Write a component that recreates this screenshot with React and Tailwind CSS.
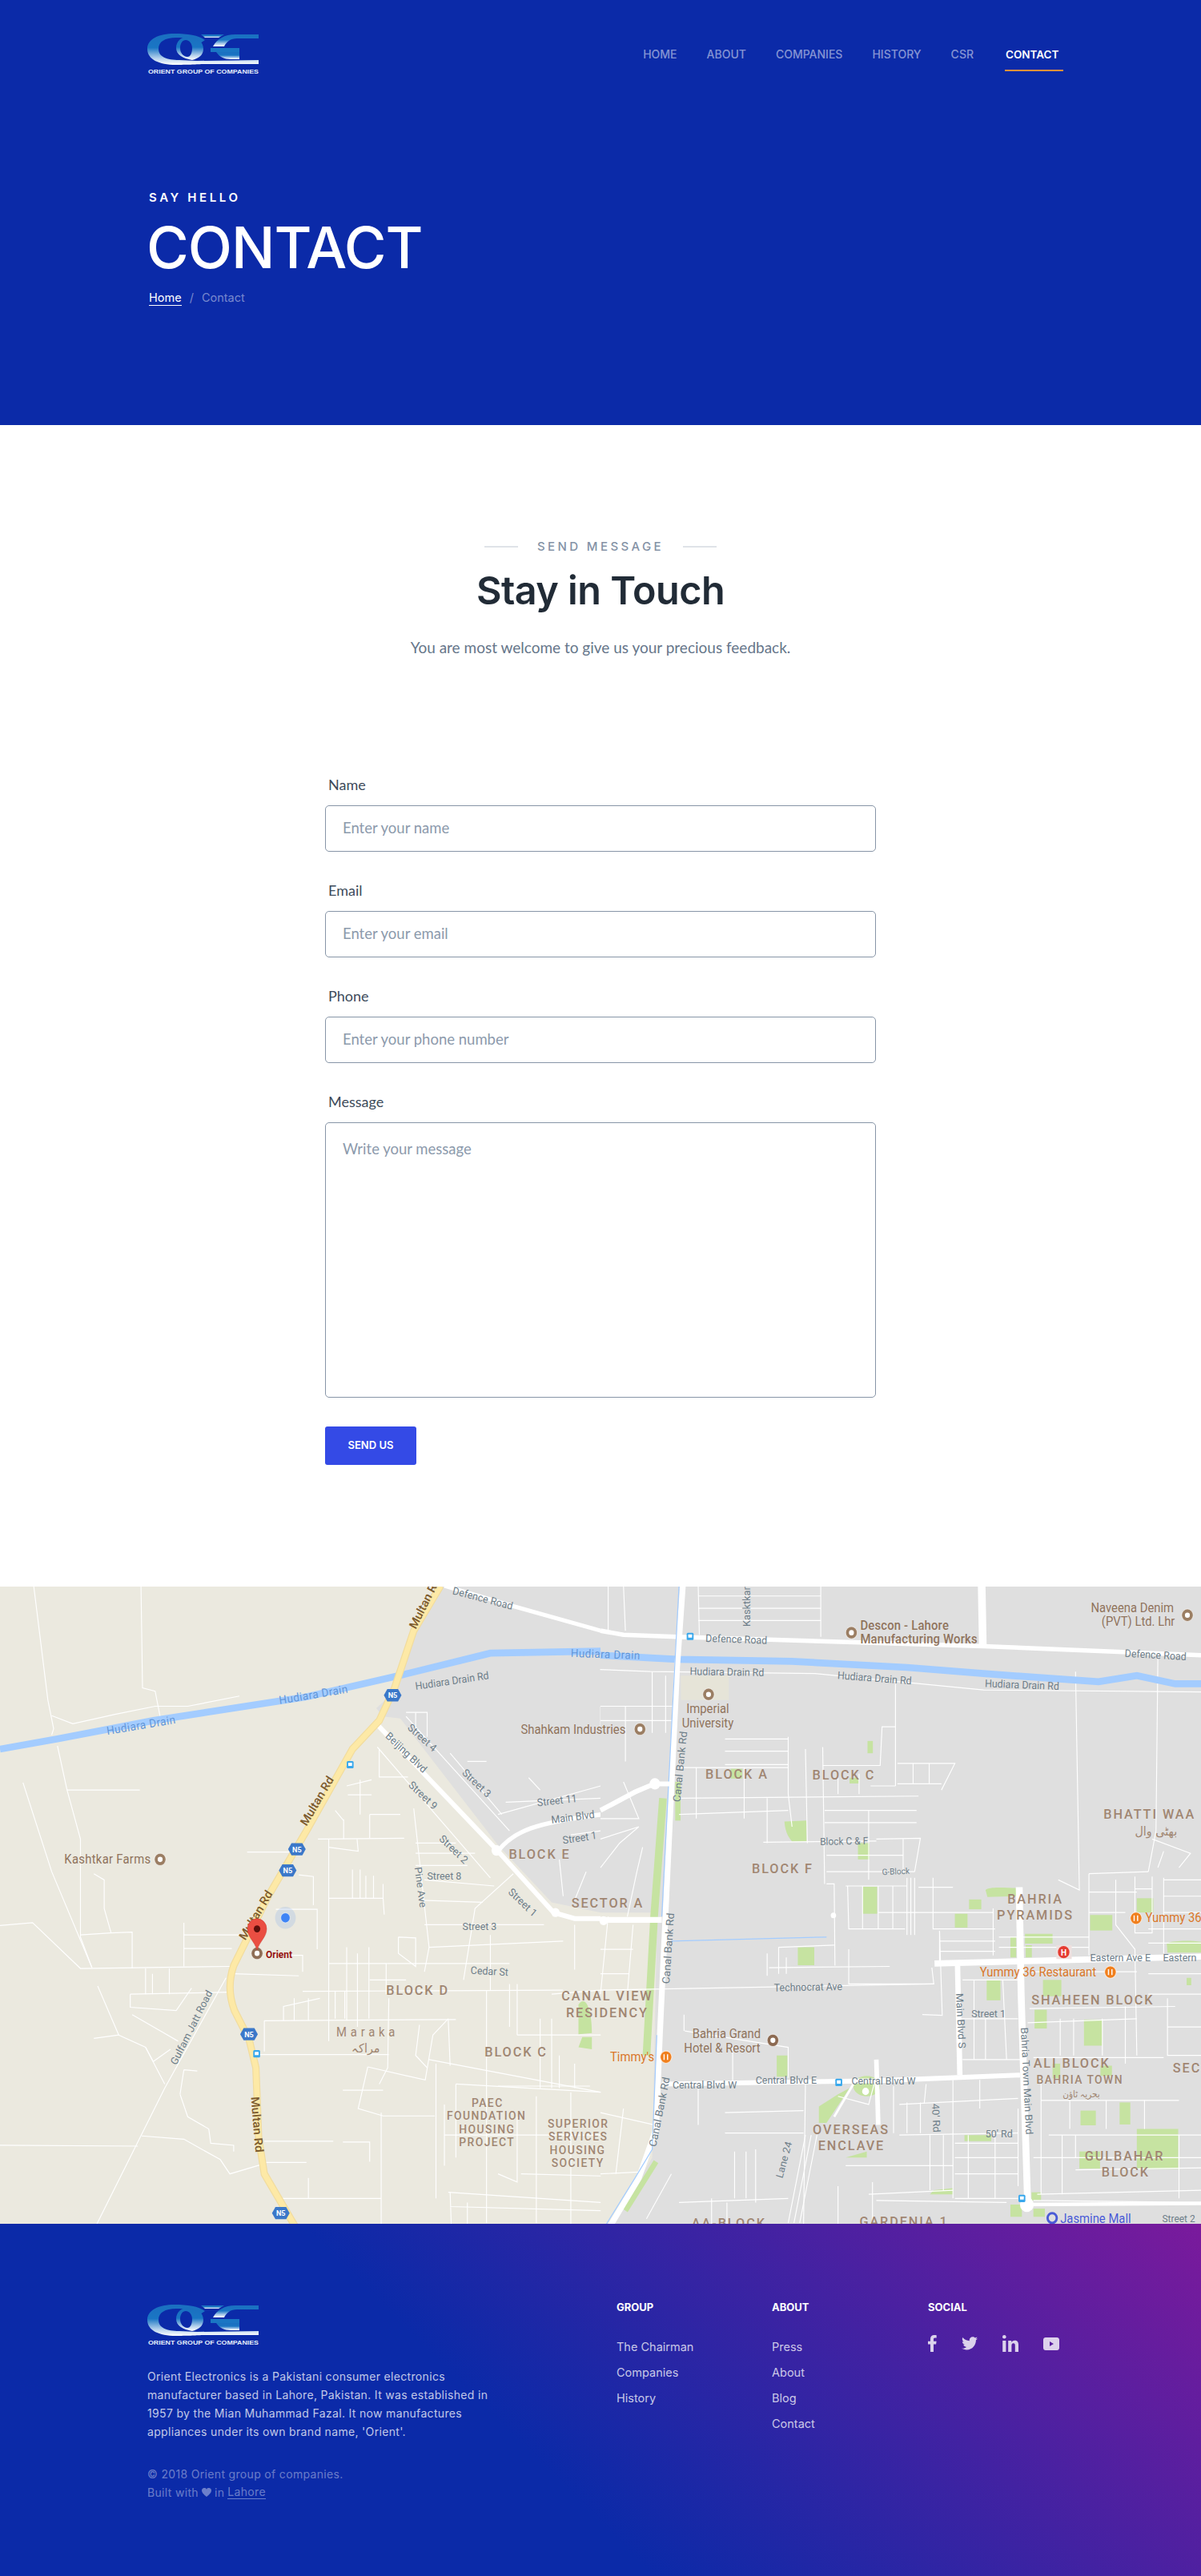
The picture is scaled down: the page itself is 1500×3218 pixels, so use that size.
import React from "react";

const POP = "font-['Inter','Liberation_Sans',sans-serif]";
const AVE = "font-['Lato','Open_Sans',sans-serif]";

function Logo({ id }) {
  return (
    <svg width="140" height="50" viewBox="0 0 140 50" className="block">
      <defs>
        <linearGradient id={id} x1="0" y1="0" x2="0" y2="1">
          <stop offset="0" stopColor="#1a6fc0" />
          <stop offset="0.45" stopColor="#1a76c4" />
          <stop offset="0.8" stopColor="#b9d4ee" />
          <stop offset="1" stopColor="#ffffff" />
        </linearGradient>
      </defs>
      <path fill={`url(#${id})`} fillRule="evenodd" d="M34 0 C50 0 64 2 72 8 L66 12 C60 6 48 5 36 5 C22 5 14 10 14 19 C14 29 24 33 40 33 L62 34 L139 33 L139 38 L80 38 C60 38 58 39 36 39 C14 39 0 32 0 19 C0 7 14 0 34 0 Z" />
      <path fill={`url(#${id})`} fillRule="evenodd" d="M50 4 C62 4 70 10 70 19 C70 27 64 31 56 33 C44 31 36 26 36 18 C36 10 42 4 50 4Z M48 8 C44 8 41 12 41 18 C41 25 46 29 50 29 C54 29 56 24 56 18 C56 12 52 8 48 8Z" />
      <path fill={`url(#${id})`} d="M67 1 L96 1 L89 5 L72 5 Z" />
      <path fill={`url(#${id})`} d="M139 1 L139 6 L112 6 C104 6 99 10 96 16 L82 16 C87 7 96 1 110 1 Z" />
      <path fill="#1a76c4" d="M79 18 L115 18 L115 23 L79 23 Z" />
      <path fill={`url(#${id})`} d="M86 23 L115 23 L115 32 L104 32 C96 32 90 29 86 23 Z" />
      <text x="1" y="49.5" fontSize="7.4" fontWeight="700" fill="#e4eefb" fontFamily="'Liberation Sans',sans-serif" textLength="138" lengthAdjust="spacingAndGlyphs">ORIENT GROUP OF COMPANIES</text>
    </svg>
  );
}

const leftRoads = [
  "M88,0 L125,280 L140,350 L135,365", "M368,0 L372,250 L405,258 L420,330", "M135,318 L190,338 L300,315 L405,295 L490,295 L625,270",
  "M150,392 L175,500 L210,620 L210,860 L240,935", "M175,500 L365,500", "M60,482 L135,700 L240,935",
  "M0,832 L85,825 L210,937 L600,932", "M210,855 L290,850 L345,848 L345,937", "M245,705 L272,720 L272,790 L290,850",
  "M480,825 L480,932", "M480,855 L625,855", "M480,888 L605,888", "M610,950 L780,955",
  "M380,937 L380,1000 M398,950 L398,1000 M442,937 L442,1000", "M340,1000 L340,1032 L460,1040 L500,985", "M340,1000 L600,995",
  "M255,980 L310,1100 L380,1130 L430,1220", "M310,1100 L245,1108", "M345,1050 L465,1115", "M380,1130 L400,1165 L445,1135",
  "M590,960 L430,1230 L250,1568", "M0,1370 L360,1372", "M370,1347 L480,1355 L575,1405 L600,1440 L690,1415",
  "M470,1245 L490,1300 L545,1330 L550,1365 L610,1370 L610,1385", "M480,1185 L515,1188 M470,1245 L480,1185",
  "M645,652 L760,652", "M780,708 L818,712 L818,782", "M720,792 L828,792 L828,890", "M750,905 L790,905 L790,945",
  "M858,620 L858,1115", "M830,620 L1055,618", "M858,640 L935,650 L932,620", "M858,765 L1000,765 L1003,805",
  "M920,695 L920,765 M940,695 L940,765 M955,710 L955,765 M975,710 L975,765 M1000,730 L1000,765",
  "M897,572 L897,620 M965,560 L965,618 M897,575 L875,550 M965,560 L1045,560", "M908,512 L970,512 M905,490 L970,475 M940,475 L940,560",
  "M990,400 L990,468 L1065,468", "M985,395 L1280,715", "M1080,545 L1120,885 L1108,945",
  "M1085,630 L1190,630 M1085,655 L1240,655 M1085,685 L1220,685 M1108,720 L1290,735 M1100,770 L1260,775 M1108,830 L1420,830",
  "M1340,705 L1240,790 L1210,965", "M1120,885 L1470,870", "M1040,860 L1085,862 L1085,932 L1040,900 L1040,860",
  "M1010,925 L1330,925", "M1280,855 L1280,990", "M1500,830 L1500,940", "M1330,975 L1330,1080", "M1350,975 L1350,1100",
  "M905,885 L905,1065 M933,900 L933,1080 M963,885 L963,1060", "M858,925 L1010,925 M965,965 L1060,965 M1008,925 L1008,1000",
  "M790,993 L1470,990", "M835,1010 L740,1030 L740,1065 M768,1010 L768,1065 M805,1010 L805,1065 M875,993 L875,1060 M900,993 L900,1060",
  "M690,1065 L1190,1062", "M690,1065 L690,1140", "M660,1148 L1015,1148", "M1015,1010 L1012,1180 L990,1220", "M960,1178 L1110,1210 L1130,1100 L1170,1060",
  "M960,1178 L935,1280 L1000,1298 L1135,1298", "M895,1235 L1000,1235", "M1095,1075 L1085,1150 L1115,1180", "M1120,1160 L1568,1240",
  "M1170,1060 L1175,1175", "M1270,990 L1270,1560", "M1138,1170 L1138,1500", "M1190,1220 L1190,1400", "M1160,1270 L1160,1420",
  "M1190,1220 L1568,1240", "M1160,1345 L1568,1345", "M1350,1100 L1568,1100", "M1300,1440 L1350,1460 L1350,1300", "M1410,1060 L1410,1230 M1460,1150 L1460,1230 M1500,1170 L1500,1230 M1440,1060 L1440,1230",
  "M1300,1225 L1540,1225", "M1360,1440 L1568,1445", "M1400,1250 L1400,1560", "M1490,1240 L1490,1568", "M1170,1485 L1568,1510", "M1175,1520 L1568,1530 M1175,1485 L1178,1568 M1220,1510 L1220,1568",
  "M690,1360 L870,1360", "M895,1362 L965,1362 L965,1410", "M690,1412 L800,1412 M805,1450 L805,1500 M720,1500 L995,1500", "M995,1290 L995,1568",
  "M1060,320 L1330,600", "M1060,310 L1115,310 L1115,370", "M1085,310 L1085,370", "M1175,410 L1310,560", "M1220,430 L1270,430", "M1300,560 L1568,490", "M1320,530 L1568,520", "M1380,470 L1410,500",
  "M1490,610 L1568,600", "M1530,700 L1500,770 M1460,670 L1470,760", "M1440,1000 L1568,990", "M1568,295 L1568,350",
];

const rightRoads = [
  "M0,110 L60,118", "M255,0 L258,120 M575,0 L575,125", "M255,25 L575,25 M255,55 L575,55 M255,85 L575,85", "M20,0 L20,110 M60,0 L65,110",
  "M-1,205 L130,210 L560,215 L1000,255 L1568,260", "M135,210 L135,360 M65,295 L65,430", "M0,295 L190,295 M0,330 L190,330", "M170,220 L170,360",
  "M325,375 L490,375 M325,405 L490,405 M325,438 L490,438", "M490,370 L490,510 L500,590", "M210,445 L490,445", "M250,445 L250,570 M375,445 L375,570", "M205,520 L830,515",
  "M205,560 L490,550", "M435,520 L435,630 M535,400 L540,630", "M580,395 L585,730", "M580,440 L730,440 L735,345 L770,345", "M770,240 L770,490", "M775,435 L925,435 L890,500", "M775,485 L890,485",
  "M816,435 L816,485 M858,435 L858,485", "M705,490 L770,490 M620,460 L620,510 M675,460 L675,510", "M585,550 L825,550 M585,580 L825,580", "M700,550 L700,720", "M425,628 L720,625 M720,620 L835,618 L820,700", "M590,660 L790,660 M790,620 L790,700",
  "M590,700 L820,700 M590,730 L610,730 L612,930", "M640,735 L800,735 M645,735 L648,840 L795,840", "M684,735 L684,840 M725,735 L725,840 M763,735 L763,840", "M725,800 L1025,800", "M800,715 L800,855 M810,715 L810,855 M820,715 L820,855", "M830,738 L920,738 M868,715 L868,840 L1030,840",
  "M885,845 L885,920 M885,870 L1030,870 M885,895 L1030,895", "M1025,790 L1025,905", "M465,885 L610,880 M435,900 L435,955 M465,885 L465,950 M485,910 L485,950", "M440,935 L755,932", "M648,890 L648,975 L870,975 L865,935",
  "M0,990 L870,975", "M840,1050 L892,1052 L885,845", "M218,1050 L218,1090 M220,1090 L490,1130 L490,1205", "M345,1130 L345,1215", "M255,1225 L255,1320", "M325,1290 L530,1285 M325,1340 L530,1340", "M0,1290 L140,1320",
  "M535,1215 L530,1568", "M350,1385 L350,1500 M380,1385 L380,1500 M405,1380 L405,1510", "M205,1510 L490,1500", "M185,1440 L120,1550", "M290,1500 L290,1568 M330,1510 L330,1568", "M0,1440 L110,1435", "M60,1280 L40,1440", "M20,810 L0,1000 M85,830 L70,1000 M0,890 L85,890 M0,950 L75,950",
  "M1240,210 L1250,745 L1195,720", "M1455,170 L1450,600 L1430,700", "M1275,705 L1430,700", "M1275,705 L1275,905 M1275,750 L1400,750 M1275,800 L1370,800", "M1395,712 L1395,850 L1440,850 L1440,712 M1395,742 L1440,742", "M1345,720 L1345,830 L1395,890 L1400,1150",
  "M1470,720 L1568,720 M1470,760 L1568,760 M1470,800 L1568,800 M1470,715 L1470,900", "M1430,840 L1568,840 M1430,875 L1568,875", "M1440,620 L1540,655 L1510,690 M1470,650 L1455,690", "M1040,860 L1275,860 M1040,885 L1275,885",
  "M1120,945 L1400,945", "M1120,1035 L1500,1030", "M1115,1070 L1400,1060", "M1200,1060 L1200,1150 M1235,1060 L1235,1150 M1310,1060 L1310,1150 M1370,1030 L1370,1170", "M1130,1155 L1470,1155", "M1480,1010 L1480,1150 L1568,1150 M1480,1080 L1568,1080 M1430,950 L1568,950 M1430,1000 L1568,1000",
  "M945,965 L1095,965 M940,1060 L1090,1060", "M975,965 L975,1160 M1050,965 L1060,1160 M1005,1060 L1005,1160", "M945,1160 L1095,1160", "M1150,1260 L1510,1260 M1150,1210 L1150,1490", "M1225,1260 L1225,1330 M1320,1260 L1320,1330 M1420,1260 L1420,1330",
  "M1170,1345 L1568,1345", "M1205,1345 L1205,1490 M1240,1345 L1240,1400 M1510,1345 L1510,1500", "M1240,1430 L1568,1425", "M1130,1400 L1568,1400", "M1140,1490 L1568,1480", "M920,1210 L920,1500", "M850,1220 L845,1268 M765,1225 L765,1340 M800,1265 L800,1340 M835,1265 L835,1340",
  "M780,1270 L1090,1255 M990,1210 L990,1280", "M780,1345 L1090,1340", "M925,1365 L1090,1365 M925,1400 L1090,1400 M925,1440 L1090,1440 M925,1500 L1090,1500", "M960,1345 L960,1500 M1030,1345 L1030,1500", "M860,1345 L860,1480 M895,1345 L895,1480", "M700,1490 L920,1480",
  "M1090,1280 L1090,1470", "M535,1345 L490,1560 M550,1345 L505,1560 M565,1345 L520,1560", "M620,1250 L700,1270 L720,1200",
  "M640,1420 L920,1420", "M720,1505 L1060,1510", "M620,1470 L620,1568 M710,1460 L710,1568", "M1130,1505 L1568,1510",
  "M0,570 L100,570 L60,480 M0,620 L100,590 L50,630 L0,690", "M110,640 L95,700 L70,810",
];

const greens = [
  "M480,577 L538,575 L538,626 L500,626 C485,610 482,595 480,577Z", "M697,380 h14 v30 h-14Z", "M672,630 h30 v40 h-30Z", "M684,737 h38 v66 h-38Z", "M515,885 h43 v44 h-43Z",
  "M962,768 h32 v24 h-32Z", "M925,803 h33 v34 h-33Z", "M1005,745 C1015,735 1060,740 1085,740 L1085,760 L1010,762Z", "M1278,806 h58 v38 h-58Z", "M1400,765 h43 v35 h-43Z",
  "M1108,852 h72 v24 h-72Z", "M1070,860 h15 v50 h-15Z", "M1110,880 h16 v30 h-16Z", "M1155,965 h48 v40 h-48Z", "M1008,965 h36 v50 h-36Z", "M1133,1038 h32 v46 h-32Z", "M1262,1062 h48 v64 h-48Z",
  "M1253,1285 h40 v36 h-40Z", "M1355,1265 h28 v54 h-28Z", "M1400,1330 h108 v98 h-108Z", "M1250,1385 h54 v42 h-54Z", "M460,1150 h28 v52 h-28Z", "M570,1275 L620,1245 L650,1230 L590,1315 L570,1315Z",
  "M660,1225 a35,25 0 1 0 70,0 a35,25 0 0 0 -70,0Z", "M950,1345 L1020,1345 L1020,1360 L950,1360Z", "M640,1400 L695,1385 L695,1400Z", "M1180,1170 h20 v36 h-20Z", "M1305,1175 h30 v25 h-30Z", "M1530,960 h12 v18 h-12Z",
  "M1478,875 C1500,868 1540,868 1568,872 L1568,898 L1480,898Z", "M650,470 h24 v14 h-24Z", "M340,448 h30 v24 h-30Z", "M195,480 h14 v95 h-14Z", "M870,1480 L920,1475 L920,1490 L860,1490Z", "M1070,1515 h30 v30 h-30Z", "M1125,1485 h25 v20 h-25Z", "M1130,1525 h30 v20 h-30Z",
];

const T = ({ x, y, s = 30, c = "#6d7d88", r, w = 400, sp, a = "start", f = "Roboto,'Noto Sans',sans-serif", children }) => (
  <text x={x} y={y} fontSize={s} fill={c} fontWeight={w} letterSpacing={sp} textAnchor={a} fontFamily={f}
    stroke="#ffffff" strokeOpacity="0.35" strokeWidth="0.6" paintOrder="stroke"
    transform={r ? `rotate(${r} ${x} ${y})` : undefined}>{children}</text>
);

const N5 = ({ x, y }) => (
  <g>
    <path d={`M${x - 23},${y} L${x - 14},${y - 15} L${x + 14},${y - 15} L${x + 23},${y} L${x + 14},${y + 15} L${x - 14},${y + 15} Z`} fill="#3b78c9" />
    <text x={x} y={y + 7} fontSize="19" fill="#fff" fontWeight="700" textAnchor="middle" fontFamily="Roboto,sans-serif">N5</text>
  </g>
);
const Bus = ({ x, y }) => (
  <g>
    <rect x={x - 9} y={y - 9} width="18" height="18" rx="3" fill="#39a8ec" />
    <rect x={x - 5} y={y - 5} width="10" height="8" rx="1" fill="#fff" />
  </g>
);
const Poi = ({ x, y, c = "#9b7e63" }) => (
  <g>
    <circle cx={x} cy={y} r="15" fill={c} stroke="#fff" strokeOpacity="0.6" strokeWidth="2" />
    <circle cx={x} cy={y} r="6.5" fill="#fff" />
  </g>
);
const Food = ({ x, y }) => (
  <g>
    <circle cx={x} cy={y} r="15" fill="#f07f1d" stroke="#fff" strokeOpacity="0.7" strokeWidth="2" />
    <path d={`M${x - 5},${y - 7} v14 M${x + 4},${y - 7} v14`} stroke="#fff" strokeWidth="3" />
  </g>
);

const BR = "#8f735c";
const BROWN_B = "#a08672";
const MULTAN = "M1150,0 L1080,110 L1030,250 L990,330 L920,400 L800,600 L700,760 L610,930 Q590,985 612,1040 L650,1110 L668,1180 L675,1350 L690,1440 L770,1568";

function MapArt() {
  return (
    <svg viewBox="0 0 1500 796" width="1500" height="796" className="block" preserveAspectRatio="none">
      <rect width="1500" height="796" fill="#ebe9df" />
      <g transform="translate(0,-1) scale(0.47847,0.5102)">
        <path d="M1150,0 L1568,0 L1568,800 L1440,775 L1300,635 L1045,325 L1000,320 L982,300 L1040,250 L1080,110 Z" fill="#dfdfdf" />
        {leftRoads.map((d, i) => <path key={i} d={d} fill="none" stroke="#fff" strokeWidth="2.4" />)}
        <path d="M1160,0 L1340,50 L1568,110" fill="none" stroke="#fff" strokeWidth="10" />
        <path d="M0,400 L150,375 L400,330 L800,272 L1050,218 L1280,165 L1568,160" fill="none" stroke="#a3ccff" strokeWidth="17" />
        <path d="M985,340 L1300,650 L1445,800 L1500,815 L1568,815" fill="none" stroke="#fff" strokeWidth="12" />
        <path d="M1300,650 C1340,600 1400,580 1568,560" fill="none" stroke="#fff" strokeWidth="11" />
        <path d={MULTAN} fill="none" stroke="#f1dc9e" strokeWidth="19" />
        <path d={MULTAN} fill="none" stroke="#fde9a6" strokeWidth="14" />
        <circle cx="1296" cy="648" r="13" fill="#fff" />
        <circle cx="1450" cy="800" r="11" fill="#fff" />
        <T x="1085" y="108" s="30" c="#7c5a2c" r="-62" w={500}>Multan Rd</T>
        <T x="1180" y="20" s="26" r="14">Defence Road</T>
        <T x="1085" y="255" s="26" r="-8">Hudiara Drain Rd</T>
        <T x="730" y="290" s="28" c="#5f95d8" r="-9" sp="1">Hudiara Drain</T>
        <T x="280" y="365" s="28" c="#5f95d8" r="-9" sp="1">Hudiara Drain</T>
        <T x="1062" y="350" s="26" r="40">Street 4</T>
        <T x="1005" y="370" s="26" r="42">Beijing Blvd</T>
        <T x="1205" y="460" s="26" r="42">Street 3</T>
        <T x="1065" y="490" s="26" r="42">Street 9</T>
        <T x="1403" y="540" s="26" r="-6">Street 11</T>
        <T x="1440" y="582" s="26" r="-7">Main Blvd</T>
        <T x="1470" y="632" s="26" r="-8">Street 1</T>
        <T x="1145" y="622" s="26" r="42">Street 2</T>
        <T x="1115" y="720" s="26">Street 8</T>
        <T x="1082" y="690" s="26" r="82">Pine Ave</T>
        <T x="1325" y="752" s="26" r="42">Street 1</T>
        <T x="1207" y="842" s="26">Street 3</T>
        <T x="1228" y="950" s="26" r="3">Cedar St</T>
        <T x="800" y="590" s="30" c="#7c5a2c" r="-58" w={500}>Multan Rd</T>
        <T x="640" y="870" s="30" c="#7c5a2c" r="-58" w={500}>Multan Rd</T>
        <T x="655" y="1252" s="30" c="#7c5a2c" r="85" w={500}>Multan Rd</T>
        <T x="460" y="1175" s="26" r="-62">Gulfam Jatt Road</T>
        <T x="168" y="680" s="31" c={BR} sp="0.6">Kashtkar Farms</T>
        <Poi x={418} y={670} />
        <T x="1328" y="668" s="34" c={BROWN_B} w={500} sp="4">BLOCK E</T>
        <T x="1008" y="1002" s="34" c={BROWN_B} w={500} sp="4">BLOCK D</T>
        <T x="1265" y="1152" s="34" c={BROWN_B} w={500} sp="4">BLOCK C</T>
        <T x="878" y="1104" s="31" c={BROWN_B} sp="10">Maraka</T>
        <text x="955" y="1142" fontSize="30" fill={BROWN_B} textAnchor="middle" fontFamily="'DejaVu Sans',sans-serif">مراکہ</text>
        <T x="1231" y="1276" s="29" c={BROWN_B} w={500} sp="3">PAEC</T>
        <T x="1166" y="1308" s="29" c={BROWN_B} w={500} sp="3">FOUNDATION</T>
        <T x="1198" y="1341" s="29" c={BROWN_B} w={500} sp="3">HOUSING</T>
        <T x="1198" y="1373" s="29" c={BROWN_B} w={500} sp="3">PROJECT</T>
        <path d="M1510,1025 C1530,1000 1545,1040 1545,1095 L1510,1098 Z M1510,1130 L1520,1105 L1545,1105 L1545,1135 Z" fill="#c5e3a0" />
        <N5 x={1025} y={268} /><N5 x={775} y={645} /><N5 x={751} y={697} /><N5 x={650} y={1098} /><N5 x={733} y={1536} />
        <Bus x={914} y={438} /><Bus x={670} y={1146} />
        <circle cx="745" cy="813" r="27" fill="#4285f4" fillOpacity="0.15" />
        <circle cx="745" cy="813" r="12" fill="#3f84f5" stroke="#fff" strokeWidth="1" />
        <circle cx="671" cy="900" r="15" fill="#8e6d55" stroke="#fff" strokeOpacity="0.5" strokeWidth="2" />
        <circle cx="671" cy="900" r="6.5" fill="#fff" />
        <path d="M671,892 C664,870 646,860 646,840 A25,25 0 0 1 696,840 C696,860 678,870 671,892 Z" fill="#ea4e42" stroke="#c9372c" strokeWidth="1" />
        <circle cx="671" cy="840" r="8.5" fill="#5c0f0a" />
        <T x="694" y="912" s="25" c="#96120f" w={700}>Orient</T>
      </g>
      <g transform="translate(750,-1) scale(0.47847,0.5102)">
        <path d="M0,0 L1568,0 L1568,1568 L20,1568 L110,1440 L135,1400 L148,800 L0,800 Z" fill="#dfdfdf" />
        <path d="M210,220 h125 v60 h-125Z" fill="#e6e4d8" />
        {greens.map((d, i) => <path key={i} d={d} fill="#c6e3a1" />)}
        <path d="M163,520 L140,810 L120,1150" fill="none" stroke="#c6e3a1" strokeWidth="20" />
        <path d="M145,1410 L65,1530" fill="none" stroke="#c6e3a1" strokeWidth="14" />
        {rightRoads.map((d, i) => <path key={i} d={d} fill="none" stroke="#fff" strokeWidth="2.4" />)}
        <path d="M0,110 L60,120 L200,125 L1000,148 L1568,170" fill="none" stroke="#fff" strokeWidth="11" />
        <path d="M995,0 L998,148" fill="none" stroke="#fff" strokeWidth="20" />
        <path d="M0,170 L200,180 L500,185 L800,200 L1000,215 L1300,235 L1400,220 L1500,240 L1568,240" fill="none" stroke="#a3ccff" strokeWidth="17" />
        <path d="M215,0 L200,200 L170,800 L155,1100 L145,1330 L100,1450 L25,1568" fill="none" stroke="#fff" strokeWidth="15" />
        <path d="M205,0 L188,300 L160,810" fill="none" stroke="#a3ccff" strokeWidth="2.5" />
        <path d="M147,1100 L135,1380 L90,1450 L12,1568" fill="none" stroke="#a3ccff" strokeWidth="2.5" />
        <path d="M185,870 L590,860" fill="none" stroke="#a3ccff" strokeWidth="2.5" />
        <path d="M0,550 L90,505 L140,485 L180,485" fill="none" stroke="#fff" strokeWidth="12" />
        <circle cx="142" cy="485" r="14" fill="#fff" />
        <path d="M0,818 L160,818" fill="none" stroke="#fff" strokeWidth="14" />
        <circle cx="8" cy="820" r="11" fill="#fff" />
        <path d="M160,1220 L720,1212 L1095,1198" fill="none" stroke="#fff" strokeWidth="12" />
        <path d="M872,925 L1270,915 L1568,908" fill="none" stroke="#fff" strokeWidth="15" />
        <path d="M932,930 L938,1198" fill="none" stroke="#fff" strokeWidth="14" />
        <path d="M1093,738 L1098,1000 L1115,1515" fill="none" stroke="#fff" strokeWidth="18" />
        <path d="M1105,1515 L1568,1512" fill="none" stroke="#fff" strokeWidth="9" />
        <circle cx="1113" cy="1515" r="18" fill="#fff" />
        <path d="M720,1160 L725,1320" fill="none" stroke="#fff" strokeWidth="12" />
        <path d="M610,1300 L660,1220" fill="none" stroke="#fff" strokeWidth="6" />
        <circle cx="692" cy="1238" r="9" fill="#fff" />
        <circle cx="608" cy="807" r="7" fill="#fff" />
        <T x="-78" y="174" s="28" c="#5f95d8" r="2" sp="1">Hudiara Drain</T>
        <T x="-208" y="362" s="31" c={BR}>Shahkam Industries</T>
        <T x="274" y="137" s="26" r="2">Defence Road</T>
        <T x="390" y="100" s="25" r="-90">Kasktkar</T>
        <T x="678" y="108" s="31" c={BR} w={500} sp="0.4">Descon - Lahore</T>
        <T x="678" y="142" s="31" c={BR} w={500} sp="0.4">Manufacturing Works</T>
        <Poi x={655} y={115} />
        <T x="1280" y="64" s="31" c={BR}>Naveena Denim</T>
        <T x="1308" y="99" s="31" c={BR}>(PVT) Ltd. Lhr</T>
        <Poi x={1532} y={72} />
        <T x="1368" y="174" s="26" r="3">Defence Road</T>
        <T x="233" y="218" s="26" r="1">Hudiara Drain Rd</T>
        <T x="618" y="228" s="26" r="4">Hudiara Drain Rd</T>
        <T x="1003" y="248" s="26" r="2">Hudiara Drain Rd</T>
        <Poi x={282} y={266} />
        <T x="280" y="312" s="31" c={BR} a="middle">Imperial</T>
        <T x="280" y="347" s="31" c={BR} a="middle">University</T>
        <Poi x={103} y={351} />
        <T x="208" y="530" s="27" r="-84" c="#6d7d88">Canal Bank Rd</T>
        <T x="180" y="975" s="27" r="-86" c="#6d7d88">Canal Bank Rd</T>
        <T x="145" y="1375" s="27" r="-78" c="#6d7d88">Canal Bank Rd</T>
        <T x="274" y="472" s="34" c={BROWN_B} w={500} sp="4">BLOCK A</T>
        <T x="553" y="474" s="34" c={BROWN_B} w={500} sp="4">BLOCK C</T>
        <T x="395" y="703" s="34" c={BROWN_B} w={500} sp="4">BLOCK F</T>
        <T x="-76" y="788" s="34" c={BROWN_B} w={500} sp="4">SECTOR A</T>
        <T x="-102" y="1016" s="34" c={BROWN_B} w={500} sp="4">CANAL VIEW</T>
        <T x="-90" y="1056" s="34" c={BROWN_B} w={500} sp="4">RESIDENCY</T>
        <T x="-138" y="1326" s="29" c={BROWN_B} w={500} sp="3">SUPERIOR</T>
        <T x="-136" y="1358" s="29" c={BROWN_B} w={500} sp="3">SERVICES</T>
        <T x="-133" y="1391" s="29" c={BROWN_B} w={500} sp="3">HOUSING</T>
        <T x="-128" y="1423" s="29" c={BROWN_B} w={500} sp="3">SOCIETY</T>
        <T x="573" y="635" s="25" r="-1">Block C & F</T>
        <T x="735" y="708" s="21" r="-2">G-Block</T>
        <T x="453" y="993" s="26" r="-1">Technocrat Ave</T>
        <T x="1313" y="570" s="34" c={BROWN_B} w={500} sp="4">BHATTI WAA</T>
        <text x="1450" y="612" fontSize="30" fill={BROWN_B} textAnchor="middle" fontFamily="'DejaVu Sans',sans-serif">بھٹی وال</text>
        <T x="1135" y="779" s="34" c={BROWN_B} w={500} sp="4" a="middle">BAHRIA</T>
        <T x="1135" y="818" s="34" c={BROWN_B} w={500} sp="4" a="middle">PYRAMIDS</T>
        <Food x={1398} y={814} />
        <T x="1422" y="824" s="31" c="#d9772a">Yummy 36</T>
        <rect x="1190" y="880" width="40" height="34" fill="#eee0df" />
        <circle cx="1209" cy="897" r="15" fill="#e53c32" />
        <text x="1209" y="905" fontSize="21" fill="#fff" fontWeight="700" textAnchor="middle" fontFamily="Roboto,sans-serif">H</text>
        <T x="1278" y="920" s="26">Eastern Ave E</T>
        <T x="1468" y="920" s="26">Eastern</T>
        <T x="990" y="957" s="31" c="#d9772a">Yummy 36 Restaurant</T>
        <Food x={1331} y={946} />
        <T x="1125" y="1026" s="34" c={BROWN_B} w={500} sp="4">SHAHEEN BLOCK</T>
        <T x="968" y="1056" s="26">Street 1</T>
        <T x="928" y="998" s="26" r="87">Main Blvd S</T>
        <T x="1097" y="1082" s="26" r="87">Bahria Town Main Blvd</T>
        <T x="1130" y="1180" s="34" c={BROWN_B} w={500} sp="4">ALI BLOCK</T>
        <T x="1138" y="1220" s="29" c={BROWN_B} w={500} sp="3">BAHRIA TOWN</T>
        <text x="1255" y="1252" fontSize="22" fill={BROWN_B} textAnchor="middle" fontFamily="'DejaVu Sans',sans-serif">بحریہ ٹاؤن</text>
        <T x="1494" y="1192" s="34" c={BROWN_B} w={500} sp="4">SEC</T>
        <T x="240" y="1108" s="31" c={BR}>Bahria Grand</T>
        <T x="218" y="1143" s="31" c={BR}>Hotel & Resort</T>
        <Poi x={450} y={1113} c="#8c6a52" />
        <T x="25" y="1164" s="31" c="#d9772a">Timmy's</T>
        <Food x={171} y={1154} />
        <T x="188" y="1231" s="26">Central Blvd W</T>
        <T x="405" y="1219" s="26">Central Blvd E</T>
        <T x="655" y="1222" s="26">Central Blvd W</T>
        <Bus x={622} y={1216} /><Bus x={234} y={124} /><Bus x={1100} y={1500} />
        <T x="554" y="1343" s="34" c={BROWN_B} w={500} sp="4">OVERSEAS</T>
        <T x="568" y="1382" s="34" c={BROWN_B} w={500} sp="4">ENCLAVE</T>
        <T x="865" y="1268" s="26" r="87">40' Rd</T>
        <T x="1005" y="1350" s="26">50' Rd</T>
        <T x="475" y="1452" s="26" r="-74">Lane 24</T>
        <T x="1264" y="1408" s="34" c={BROWN_B} w={500} sp="4">GULBAHAR</T>
        <T x="1308" y="1447" s="34" c={BROWN_B} w={500} sp="4">BLOCK</T>
        <T x="238" y="1572" s="34" c={BROWN_B} w={500} sp="4">AA-BLOCK</T>
        <T x="676" y="1568" s="34" c={BROWN_B} w={500} sp="4">GARDENIA 1</T>
        <circle cx="1179" cy="1548" r="12" fill="none" stroke="#4a5bd6" strokeWidth="6" />
        <T x="1200" y="1560" s="31" c="#4a5bd6">Jasmine Mall</T>
        <T x="1466" y="1558" s="25">Street 2</T>
      </g>
    </svg>
  );
}

const navItems = ["HOME", "ABOUT", "COMPANIES", "HISTORY", "CSR"];

function Field({ label, placeholder }) {
  return (
    <div className="mb-[35px]">
      <label className="block pl-1 text-[18px] leading-[26px] text-[#3d4a5a] mb-[13px]">{label}</label>
      <div className="h-[58px] rounded-[5px] border border-[#8795a7] px-[21px] flex items-center text-[18.5px] text-[#8c9aac]">{placeholder}</div>
    </div>
  );
}

function FootCol({ title, items, cls }) {
  return (
    <div className={cls}>
      <h4 className="text-[13px] leading-[20px] font-bold text-white mb-[30px]">{title}</h4>
      <ul className="flex flex-col gap-[12px]">
        {items.map((t) => <li key={t} className="text-[14.5px] leading-[20px] text-white/75">{t}</li>)}
      </ul>
    </div>
  );
}

export default function App() {
  return (
    <div className={`w-[1500px] h-[3218px] bg-white overflow-hidden ${AVE}`}>
      <header className={`h-[531px] bg-[#0b2aa8] px-[184px] pt-[42px] ${POP}`}>
        <div className="flex items-start justify-between">
          <Logo id="lg1" />
          <nav className="flex items-start mr-[-12px] gap-[37px] pt-[16px]">
            {navItems.map((n) => <a key={n} className="text-[14px] leading-[20px] font-medium text-white/50">{n}</a>)}
            <a className="ml-[2px] px-[1px] w-[73px] h-[31px] border-b-2 border-[#f5913a] text-[13.5px] leading-[20px] font-semibold text-white">CONTACT</a>
          </nav>
        </div>
        <div className="pl-[2px] pt-[143px]">
          <div className="text-[15px] leading-[24px] font-semibold tracking-[3.6px] text-white">SAY HELLO</div>
          <h1 className="mt-[5px] text-[72px] leading-[90px] font-medium text-white tracking-[-1px] -ml-[3px]">CONTACT</h1>
          <div className="mt-[6px] flex items-center text-[14.5px] leading-[24px]">
            <span className="text-white border-b border-white leading-[18px]">Home</span>
            <span className="mx-[10px] text-white/45">/</span>
            <span className="text-white/45">Contact</span>
          </div>
        </div>
      </header>

      <section className="h-[1451px] pt-[140px]">
        <div className="flex items-center justify-center gap-[24px]">
          <span className="w-[42px] h-[2px] bg-[#dfe3e8]" />
          <span className={`text-[15px] leading-[24px] font-medium tracking-[3.4px] text-[#8492a6] ${POP}`}>SEND MESSAGE</span>
          <span className="w-[42px] h-[2px] bg-[#dfe3e8]" />
        </div>
        <h2 className={`mt-[11px] text-center text-[48.5px] leading-[64px] font-semibold text-[#212b36] tracking-[-0.5px] ${POP}`}>Stay in Touch</h2>
        <p className="mt-[24px] text-center text-[19px] leading-[30px] text-[#66768a]">You are most welcome to give us your precious feedback.</p>
        <form className="w-[688px] ml-[406px] mt-[143px]">
          <Field label="Name" placeholder="Enter your name" />
          <Field label="Email" placeholder="Enter your email" />
          <Field label="Phone" placeholder="Enter your phone number" />
          <div>
            <label className="block pl-1 text-[18px] leading-[26px] text-[#3d4a5a] mb-[13px]">Message</label>
            <div className="h-[344px] rounded-[5px] border border-[#8795a7] px-[21px] pt-[20px] text-[18.5px] leading-[24px] text-[#8c9aac]">Write your message</div>
          </div>
          <div className={`mt-[36px] w-[114px] h-[48px] rounded-[3px] bg-[#344ae6] flex items-center justify-center text-[13px] font-semibold text-white ${POP}`}>SEND US</div>
        </form>
      </section>

      <MapArt />

      <footer className={`h-[440px] pt-[101px] px-[184px] flex bg-[linear-gradient(45deg,#0b2aa8_42%,#7a1a9c_100%)] ${POP}`}>
        <div className="w-[586px] shrink-0">
          <Logo id="lg2" />
          <p className="mt-[28px] w-[440px] text-[14px] leading-[23px] tracking-[0.33px] text-white/75">
            Orient Electronics is a Pakistani consumer electronics<br />manufacturer based in Lahore, Pakistan. It was established in<br />1957 by the Mian Muhammad Fazal. It now manufactures<br />appliances under its own brand name, 'Orient'.
          </p>
          <p className="mt-[30px] text-[14px] leading-[23px] tracking-[0.33px] text-white/40">
            © 2018 Orient group of companies.<br />
            <span className="inline-flex items-center gap-[4px]">Built with
              <svg width="12" height="11" viewBox="0 0 24 22" fill="currentColor"><path d="M12 22 C5 16 0 12 0 6.5 A6.3 6.3 0 0 1 12 3.5 A6.3 6.3 0 0 1 24 6.5 C24 12 19 16 12 22Z" /></svg>
              in <span className="border-b border-white/40 leading-[16px]">Lahore</span></span>
          </p>
        </div>
        <div className="flex -mt-[7px]">
          <FootCol title="GROUP" items={["The Chairman", "Companies", "History"]} cls="w-[194px]" />
          <FootCol title="ABOUT" items={["Press", "About", "Blog", "Contact"]} cls="w-[195px]" />
          <div>
            <h4 className="text-[13px] leading-[20px] font-bold text-white">SOCIAL</h4>
            <div className="mt-[25px] flex items-center text-white/80">
              <svg className="w-[11px] h-[21px] mr-[31px]" viewBox="0 0 11 21" fill="currentColor"><path d="M3 21 V11.5 H0 V7.8 H3 V5 C3 1.8 4.9 0 7.8 0 C9.2 0 10.4 .1 10.7 .2 V3.4 H8.8 C7.3 3.4 7 4.1 7 5.2 V7.8 H10.6 L10.1 11.5 H7 V21Z" /></svg>
              <svg className="w-[20px] h-[17px] mr-[31px]" viewBox="0 0 24 20" fill="currentColor"><path d="M24 2.4 C23.1 2.8 22.2 3 21.2 3.2 C22.2 2.6 23 1.6 23.4 .4 C22.4 1 21.4 1.4 20.2 1.6 C19.3 .6 18 0 16.6 0 C13.9 0 11.7 2.2 11.7 4.9 C11.7 5.3 11.7 5.7 11.8 6 C7.7 5.8 4.1 3.9 1.7 .9 C1.2 1.6 1 2.5 1 3.4 C1 5.1 1.9 6.6 3.2 7.5 C2.4 7.5 1.6 7.3 1 6.9 V7 C1 9.4 2.7 11.4 4.9 11.8 C4.5 11.9 4.1 12 3.6 12 C3.3 12 3 12 2.7 11.9 C3.3 13.9 5.1 15.3 7.3 15.3 C5.6 16.6 3.5 17.4 1.2 17.4 C.8 17.4 .4 17.4 0 17.3 C2.2 18.7 4.8 19.5 7.5 19.5 C16.6 19.5 21.5 12 21.5 5.5 V4.9 C22.5 4.2 23.3 3.4 24 2.4Z" /></svg>
              <svg className="w-[20px] h-[21px] mr-[31px]" viewBox="0 0 20 21" fill="currentColor"><circle cx="2.3" cy="2.3" r="2.3" /><rect x="0.2" y="7" width="4.2" height="14" /><path d="M7.2 7 H11.2 V9 C11.9 7.8 13.4 6.7 15.4 6.7 C19.2 6.7 20 9.2 20 12.7 V21 H15.8 V13.6 C15.8 12 15.7 10.3 13.7 10.3 C11.8 10.3 11.4 11.8 11.4 13.5 V21 H7.2Z" /></svg>
              <svg className="w-[20px] h-[16px]" viewBox="0 0 20 16" fill="currentColor" fillRule="evenodd"><path d="M3 0 H17 C18.7 0 20 1.3 20 3 V13 C20 14.7 18.7 16 17 16 H3 C1.3 16 0 14.7 0 13 V3 C0 1.3 1.3 0 3 0Z M8 5 V11 L13 8Z" /></svg>
            </div>
          </div>
        </div>
      </footer>
    </div>
  );
}
